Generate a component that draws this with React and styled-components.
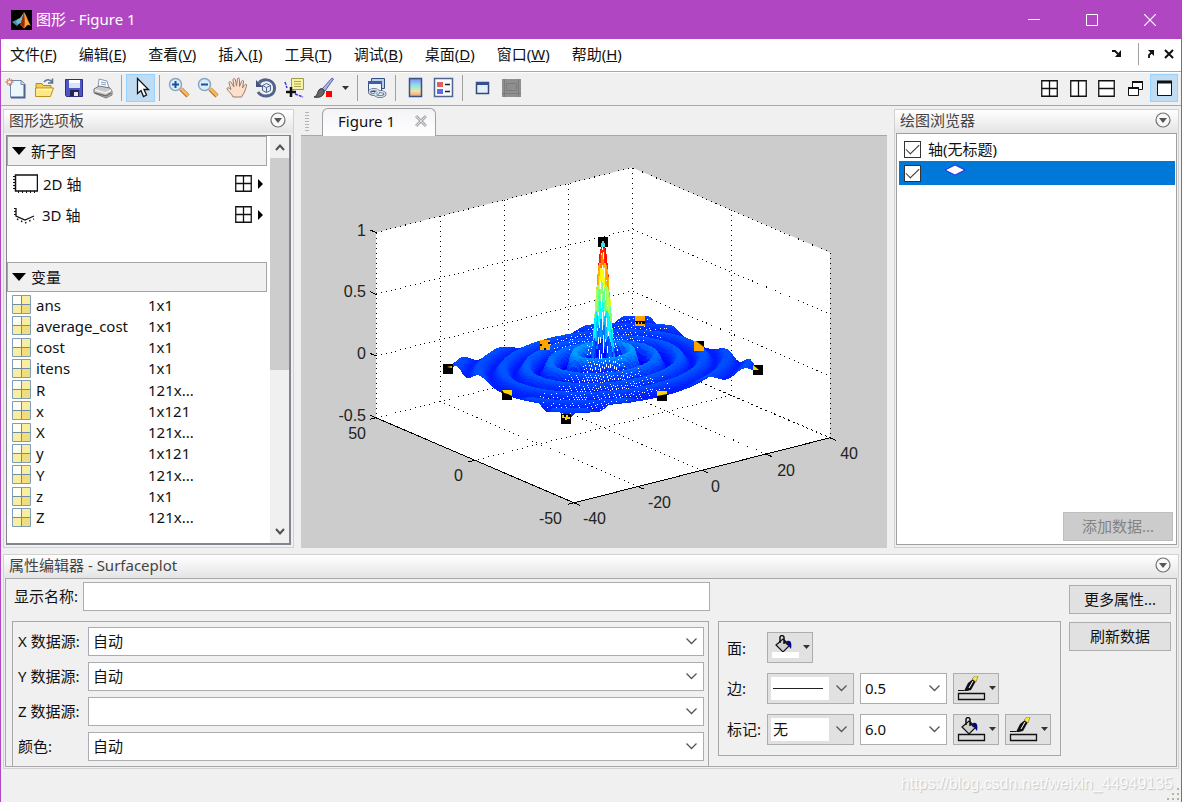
import React from "react"
import styled, { createGlobalStyle } from "styled-components"

const GlobalStyle = createGlobalStyle`
  * {
    box-sizing: border-box;
  }
  body {
    margin: 0;
    background: #f0f0f0;
    color: #111;
    font-family: "Noto Sans", "Noto Sans CJK SC", sans-serif;
    font-size: 15px;
    line-height: 20px;
  }
  button, input, select {
    font: inherit;
    color: inherit;
    margin: 0;
    padding: 0;
    border-radius: 0;
  }
  svg {
    display: block;
  }
`

const Window = styled.div`
  min-height: 100vh;
  display: flex;
  flex-direction: column;
  border: solid #b146c2;
  border-width: 0 1px;
`

const TitleBar = styled.header`
  height: 39px;
  display: flex;
  align-items: center;
  background: #b146c2;
  color: #fff;
  padding: 0 2px 0 10px;
`

const WindowTitle = styled.h1`
  margin: 0 auto 0 4px;
  padding-bottom: 2px;
  font-size: 15px;
  font-weight: 400;
`

const CaptionBtn = styled.button`
  width: 58px;
  height: 39px;
  display: grid;
  place-items: center;
  border: 0;
  background: none;
`

const MenuBar = styled.nav`
  height: 33px;
  display: flex;
  align-items: center;
  gap: 22px;
  padding: 0 7px 2px 9px;
  background: #fff;
  border-bottom: 1px solid #a8a8a8;
`

const MenuItem = styled.button`
  border: 0;
  background: none;
  white-space: nowrap;
`

const MenuTools = styled.div`
  margin-left: auto;
  display: flex;
  align-items: center;
  gap: 8px;
`

const Rule = styled.span`
  width: 1px;
  height: 22px;
  background: #a0a0a0;
`

const Toolbar = styled.div`
  height: 34px;
  display: flex;
  align-items: center;
  border-top: 1px solid #fff;
  border-bottom: 1px solid #a8a8a8;
  padding: 0 3px 2px 0;
`

const Tool = styled.button`
  width: ${(p) => p.$width || 29}px;
  height: 28px;
  display: grid;
  place-items: center;
  border: 1px solid ${(p) => (p.$active ? "#99d1ff" : "transparent")};
  background: ${(p) => (p.$active ? "#bfdcf3" : "none")};
`

const Separator = styled.span`
  width: 9px;
  height: 26px;
  display: grid;
  justify-content: center;
  &::before {
    content: "";
    width: 1px;
    background: #a0a0a0;
  }
`

const Spacer = styled.span`
  flex: 1;
`

const Workspace = styled.main`
  flex: 1;
  display: flex;
  gap: 7px;
  padding: 3px 2px 2px;
`

const Panel = styled.section`
  display: flex;
  flex-direction: column;
  flex: ${(p) => (p.$width ? `0 0 ${p.$width}px` : "none")};
  border: 1px solid #d2d2d2;
`

const PanelHead = styled.header`
  height: 23px;
  flex: none;
  display: flex;
  align-items: center;
  justify-content: space-between;
  padding: 0 7px 3px 5px;
  background: linear-gradient(#fff, #e4e4e4);
  color: #444;
`

const PanelTitle = styled.h2`
  margin: 0;
  font-size: 15px;
  font-weight: 400;
`

const RoundBtn = styled.button`
  border: 0;
  background: none;
`

const PaletteBox = styled.div`
  flex: 1;
  display: flex;
  margin: 2px;
  border: 2px solid #82878f;
  border-width: 1px 2px 2px 1px;
  background: #fff;
`

const PaletteBody = styled.div`
  flex: 1;
  display: flex;
  flex-direction: column;
`

const SectionHead = styled.button`
  height: 30px;
  display: flex;
  align-items: center;
  gap: 5px;
  padding: 0 4px;
  border: 1px solid #a4a4a4;
  background: #f0f0f0;
`

const AxesList = styled.div`
  height: 96px;
  padding-top: 2px;
`

const AxesRow = styled.div`
  height: 31px;
  display: flex;
  align-items: center;
  gap: 5px;
  padding: 0 3px 0 6px;
`

const PlainBtn = styled.button`
  display: flex;
  align-items: center;
  gap: 5px;
  border: 0;
  background: none;
`

const VariableTable = styled.table`
  width: 100%;
  height: 234px;
  margin-top: 2px;
  border-collapse: collapse;
  table-layout: fixed;
`

const VariableName = styled.td`
  width: 134px;
  padding: 0 0 0 5px;
`

const NameCell = styled.div`
  display: flex;
  align-items: center;
  gap: 5px;
`

const VariableSize = styled.td`
  padding: 0 0 0 7px;
`

const ScrollTrack = styled.div`
  width: 19px;
  margin-left: 3px;
  display: flex;
  flex-direction: column;
  align-items: center;
  padding: 7px 0;
  background: #f0f0f0;
`

const ScrollThumb = styled.div`
  width: 100%;
  height: 212px;
  margin: 7px 0 auto;
  background: #cdcdcd;
`

const Figure = styled.section`
  flex: 1;
  min-width: 0;
  display: flex;
  flex-direction: column;
`

const TabStrip = styled.div`
  height: 27px;
  flex: none;
  display: flex;
  align-items: flex-end;
  gap: 13px;
  padding-left: 4px;
  border-bottom: 1px solid #a8a8a8;
`

const Grip = styled.span`
  width: 4px;
  height: 20px;
  margin-bottom: 3px;
  background: repeating-linear-gradient(#b4b4b4 0 1px, #f0f0f0 1px 3px);
`

const Tab = styled.div`
  width: 114px;
  height: 28px;
  display: flex;
  align-items: center;
  justify-content: space-between;
  margin-bottom: -1px;
  padding: 0 8px 3px 15px;
  border: 1px solid #a0a0a0;
  border-bottom: 0;
  border-radius: 6px 6px 0 0;
  background: linear-gradient(#f4f4f8, #fff);
`

const PlotArea = styled.div`
  flex: 1;
  min-height: 412px;
  background: #ccc;
  overflow: hidden;
`

const BrowserBody = styled.div`
  flex: 1;
  display: flex;
  flex-direction: column;
  margin: 0 1px 2px;
  padding: 3px 1px 3px 2px;
  border: 1px solid #a0a0a0;
  background: #fff;
`

const TreeRow = styled.label`
  height: 24px;
  display: flex;
  align-items: center;
  gap: ${(p) => (p.$child ? 23 : 7)}px;
  padding-left: 5px;
  background: ${(p) => (p.$selected ? "#0078d7" : "#fff")};
  & > svg {
    margin-bottom: 6px;
  }
`

const Check = styled.input`
  appearance: none;
  width: 17px;
  height: 17px;
  display: grid;
  place-items: center;
  border: 1px solid #333;
  background: #fff;
  &:checked::before {
    content: "";
    width: 12px;
    height: 6px;
    margin-top: -4px;
    border: solid #333;
    border-width: 0 0 1px 1px;
    transform: rotate(-45deg);
  }
`

const Push = styled.button`
  width: ${(p) => p.$width || 102}px;
  height: 29px;
  padding-bottom: 1px;
  border: 1px solid #adadad;
  background: #e1e1e1;
  &:disabled {
    border-color: #bfbfbf;
    background: #ccc;
    color: #838383;
  }
`

const BrowserFoot = styled.div`
  margin-top: auto;
  display: flex;
  justify-content: flex-end;
  padding-right: 2px;
`

const Properties = styled(Panel)`
  margin: 4px 2px 0;
`

const PropertyBody = styled.form`
  height: 189px;
  display: flex;
  align-items: flex-start;
  gap: 8px;
  margin: 0 1px 1px;
  padding: 3px 5px 0 6px;
  border: 1px solid #a8a8a8;
  overflow: hidden;
`

const MainFields = styled.div`
  flex: 1;
`

const NameRow = styled.div`
  display: flex;
  align-items: center;
  gap: 5px;
  padding-left: 2px;
`

const Label = styled.label`
  padding-bottom: 2px;
  white-space: nowrap;
`

const TextBox = styled.input`
  flex: 1;
  min-width: 0;
  height: 29px;
  padding: 0 4px;
  border: 1px solid #abadb3;
  background: #fff;
`

const SourceGroup = styled.div`
  display: grid;
  grid-template-columns: 66px 1fr;
  align-items: center;
  gap: 6px 4px;
  margin: 10px 1px 0 0;
  padding: 5px 4px 8px 5px;
  border: 1px solid #a8a8a8;
  border-bottom: 0;
`

const SelectWrap = styled.span`
  display: grid;
  align-items: center;
  & > * {
    grid-area: 1 / 1;
  }
  & > svg {
    pointer-events: none;
    justify-self: end;
    margin-right: 7px;
  }
  & > svg + svg {
    justify-self: start;
    margin-left: 6px;
  }
`

const Select = styled.select`
  appearance: none;
  width: 100%;
  height: ${(p) => p.$height || 29}px;
  padding: 0 0 2px 4px;
  border: 1px solid #abadb3;
  background: #fff;
`

const FixedSelect = styled(Select)`
  padding-left: 2px;
  border: solid #e1e1e1;
  border-width: 4px 25px 4px 4px;
  outline: 1px solid #abadb3;
  outline-offset: -1px;
`

const StyleGroup = styled.div`
  display: grid;
  grid-template-columns: 34px 87px 87px 46px 46px;
  align-items: center;
  gap: 10px 6px;
  margin-top: 39px;
  padding: 10px 9px 10px 8px;
  border: 1px solid #a8a8a8;
`

const Swatch = styled.button`
  width: 46px;
  height: 31px;
  display: flex;
  align-items: center;
  justify-content: center;
  gap: 3px;
  border: 1px solid #abadb3;
  background: #e1e1e1;
`

const Actions = styled.div`
  display: flex;
  flex-direction: column;
  gap: 8px;
  padding-top: 3px;
`

const Footer = styled.footer`
  position: relative;
  height: 33px;
  display: flex;
  align-items: center;
  justify-content: flex-end;
  padding: 0 8px 3px 0;
  color: #fbfbfb;
  font-family: "Liberation Sans", Arial, sans-serif;
  font-size: 16px;
  text-shadow: 1px 1px 1px #c4c4c4;
`

const ResizeGrip = styled.span`
  position: absolute;
  right: 1px;
  bottom: 1px;
`

const menus = [
  ["文件", "F"],
  ["编辑", "E"],
  ["查看", "V"],
  ["插入", "I"],
  ["工具", "T"],
  ["调试", "B"],
  ["桌面", "D"],
  ["窗口", "W"],
  ["帮助", "H"],
]

const variables = [
  ["ans", "1x1"],
  ["average_cost", "1x1"],
  ["cost", "1x1"],
  ["itens", "1x1"],
  ["R", "121x..."],
  ["x", "1x121"],
  ["X", "121x..."],
  ["y", "1x121"],
  ["Y", "121x..."],
  ["z", "1x1"],
  ["Z", "121x..."],
]

/* ---------- icons ---------- */

const Icon = ({ w = 22, h = 22, children }) => (
  <svg width={w} height={h} viewBox={`0 0 ${w} ${h}`} fill="none" aria-hidden="true">
    {children}
  </svg>
)

const Logo = () => (
  <Icon w={21} h={20}>
    <path d="M0 0h21v20H0z" fill="#000" />
    <path d="M1 12l6-3 3 3-4 4z" fill="#3f97b5" />
    <path d="M7 9c3-1 4-4 6-7l-3 11-3 1-2-2z" fill="#7cb5c4" />
    <path d="M13 2c2 2 4 9 7 14-3-2-4-1-6 2-2 1-3-3-5-3 2-3 3-9 4-13z" fill="#e8701a" />
    <path d="M13 3c1 3 1 8 0 14-1 0-2-2-4-2 2-3 3-8 4-12z" fill="#8d2b10" />
    <path d="M13 3c3 4 3 8 6 12-3-1-3 0-5 2 0-5 0-9-1-14z" fill="#f8a637" />
  </Icon>
)

const NewIcon = () => (
  <Icon>
    <path d="M5.500 3.500h11l3 3v14h-14z" fill="#edf5fd" stroke="#7089b0" />
    <path d="M19.500 7v13.500H6" stroke="#4a638f" strokeWidth="2" />
    <path d="M16 3.500v4h4" fill="#c5d9ef" stroke="#7089b0" />
    <path d="M4.500 1v8M.5 5h8M2 2.500l5 5M7 2.500l-5 5" stroke="#e07b4c" strokeWidth="1.300" />
    <circle cx="4.500" cy="5" r="1.500" fill="#fff" />
  </Icon>
)

const OpenIcon = () => (
  <Icon>
    <path d="M2 19V6.500h6l1 2h8V12" fill="#f3cd55" stroke="#b98a1c" />
    <path d="M1.500 19.500V11h15l3 0-3 8.500z" fill="#fde883" stroke="#bf8f1f" />
    <path d="M3 12.500h15" stroke="#fff8c8" strokeWidth="1.500" />
    <path d="M10 5c2-3 6-3 8 0M18.500 1.500V6H14" stroke="#58728d" strokeWidth="1.500" />
  </Icon>
)

const SaveIcon = () => (
  <Icon>
    <path d="M2.500 2.500h17v17h-16l-1-1z" fill="#4f55c4" stroke="#302f86" />
    <path d="M6 3h11v8H6z" fill="#d4e6fa" />
    <path d="M6 3h11v3H6z" fill="#fff" />
    <path d="M7 13h9v6H7z" fill="#242452" />
    <path d="M11 15h4v4h-4z" fill="#e8e8f4" />
  </Icon>
)

const PrintIcon = () => (
  <Icon>
    <path d="M6 11L7 2l8 2 2 7z" fill="#fff" stroke="#8797a8" />
    <path d="M9 5l5 1M9 7l5 1" stroke="#7aa0d0" />
    <path d="M2 12l5-3 11 2 2 3v4l-6 3-12-5z" fill="#c8c8c8" stroke="#777" />
    <path d="M3 13l11 3 5-3" stroke="#f2f2f2" strokeWidth="1.500" />
    <path d="M3 16l11 3 5-3" stroke="#6d6d6d" strokeWidth="1.500" />
  </Icon>
)

const PointerIcon = () => (
  <Icon>
    <path
      d="M7.500 1.500v15l3.500-3 2.500 6 3-1.500-2.500-5.500h4.500z"
      fill="#fff"
      stroke="#111"
      strokeWidth="1.300"
    />
  </Icon>
)

const ZoomIcon = ({ plus }) => (
  <Icon>
    <path d="M13 12l7 7" stroke="#b97b2a" strokeWidth="4.500" />
    <path d="M13 11.500l7 7" stroke="#f5b964" strokeWidth="2.500" />
    <circle cx="7.500" cy="7.500" r="6" fill="#d9eefa" stroke="#8ba6bf" strokeWidth="1.500" />
    <path d="M4 7.500h7" stroke="#1d4f9c" strokeWidth="2" />
    {plus && <path d="M7.500 4v7" stroke="#1d4f9c" strokeWidth="2" />}
  </Icon>
)

const HandIcon = () => (
  <Icon>
    <path
      d="M7 20c-1-3-4-5-6-8 0-2 2-1.500 4 .5L3 6c0-2 2-2 2.500 0L8 10 7 3c0-2 2-2 2.500 0l1 6 1-7c.5-1.500 2-1.500 2 .5l0 7 2-5c1-2 2.500-1 2 .5l-1 6 2-3c1.500-1.500 2.500-.5 2 1l-2 6-3 5z"
      fill="#fbe0cc"
      stroke="#a07c6c"
      strokeWidth="1"
    />
  </Icon>
)

const RotateIcon = () => (
  <Icon>
    <path d="M4 6c3-4 12-5 15 2 2 7-2 11-8 11-4 0-6-1-8-4" stroke="#51628b" strokeWidth="3" />
    <path d="M1 3v7h7z" fill="#41547d" />
    <path d="M7.500 8.500l4-2 4 2v5l-4 2-4-2zM7.500 8.500l4 2 4-2M11.500 10.500V15" fill="#e3eaf5" stroke="#50658f" />
  </Icon>
)

const DataTipIcon = () => (
  <Icon>
    <path d="M7.500 1.500h12v11h-12z" fill="#f8f3a4" stroke="#a29a4a" />
    <path d="M10 4.500h7M10 7h7M10 9.500h7" stroke="#aaa45a" />
    <path d="M1 5l2 6M11 17l8 3" stroke="#3535ef" strokeWidth="1.500" strokeDasharray="3 1" />
    <path d="M7 10v10M2 15h10" stroke="#111" strokeWidth="2.500" />
  </Icon>
)

const BrushIcon = () => (
  <Icon>
    <path d="M9 12L19 1l1.500 1L12 14z" fill="#a9b2ef" stroke="#5c62ab" />
    <path d="M1 20c4-1 3-6 6-8 3-1 5 1 4 4-1 4-6 5-10 4z" fill="#666" stroke="#333" />
    <path d="M13 14h6v6h-6z" fill="#f00" />
  </Icon>
)

const LinkIcon = () => (
  <Icon>
    <path d="M5.500 1.500h13v10h-13z" fill="#b9cfe9" stroke="#344f87" />
    <path d="M2.500 4.500h13v10h-13z" fill="#f0f6fd" stroke="#344f87" />
    <path d="M2 4h14v3H2z" fill="#3e5fa5" />
    <ellipse cx="8" cy="15" rx="4.500" ry="2.500" stroke="#5b6a80" strokeWidth="3" />
    <ellipse cx="14" cy="17" rx="5" ry="2.500" stroke="#5b6a80" strokeWidth="3" />
    <ellipse cx="8" cy="15" rx="4.500" ry="2.500" stroke="#d4e2ee" strokeWidth="1.300" />
    <ellipse cx="14" cy="17" rx="5" ry="2.500" stroke="#d4e2ee" strokeWidth="1.300" />
  </Icon>
)

const ColorbarIcon = () => (
  <Icon>
    <defs>
      <linearGradient id="bar" x1="0" y1="0" x2="0" y2="1">
        <stop offset="0" stopColor="#8e84e6" />
        <stop offset=".35" stopColor="#85dff0" />
        <stop offset=".7" stopColor="#eee69a" />
        <stop offset="1" stopColor="#f69885" />
      </linearGradient>
    </defs>
    <path d="M5.500 1.500h12v18h-12z" fill="url(#bar)" stroke="#3b5284" strokeWidth="1.500" />
  </Icon>
)

const LegendIcon = () => (
  <Icon>
    <path d="M1.500 1.500h18v18h-18z" fill="#f7faff" stroke="#50658f" strokeWidth="1.500" />
    <path d="M4 5h6v5H4z" fill="#e2605c" />
    <path d="M4 12h6v5H4z" fill="#6767e0" />
    <path d="M12 7.500h5M12 14.500h5" stroke="#222" strokeWidth="1.500" />
  </Icon>
)

const HideToolsIcon = () => (
  <Icon>
    <path d="M5.500 5.500h12v11h-12z" fill="#e3effc" stroke="#354878" strokeWidth="1.500" />
    <path d="M5 5h13v3H5z" fill="#354f93" />
  </Icon>
)

const ShowToolsIcon = () => (
  <Icon>
    <path d="M2 2h19v18H2z" fill="#8f8f8f" />
    <path d="M6.500 6.500h10v7h-10zM2 16.500h19M4.500 2v18M18.500 2v18" stroke="#7c7c7c" />
  </Icon>
)

const TileIcon = ({ cols, rows }) => (
  <Icon w={17} h={17}>
    <path
      d={`M.75.75h15.500v15.500H.75z${cols ? "M8.500 1v15" : ""}${rows ? "M1 8.500h15" : ""}`}
      fill="#fff"
      stroke="#111"
      strokeWidth="1.300"
    />
  </Icon>
)

const CascadeIcon = () => (
  <Icon w={17} h={17}>
    <path d="M5.500 2.500h10v7h-10z" fill="#fff" stroke="#111" />
    <path d="M5 2h11" stroke="#111" strokeWidth="2" />
    <path d="M1.500 8.500h10v7h-10z" fill="#fff" stroke="#111" />
    <path d="M1 8h11" stroke="#111" strokeWidth="2" />
  </Icon>
)

const MaximizeIcon = () => (
  <Icon w={17} h={17}>
    <path d="M1.500 1.500h14v14h-14z" fill="#fff" stroke="#111" />
    <path d="M1 2h15" stroke="#111" strokeWidth="3" />
  </Icon>
)

const CircleMenuIcon = () => (
  <Icon w={16} h={16}>
    <circle cx="8" cy="8" r="7" fill="#f8f8f8" stroke="#707070" strokeWidth="1.200" />
    <path d="M4 6h8l-4 5z" fill="#555" />
  </Icon>
)

const CaretDown = () => (
  <Icon w={7} h={5}>
    <path d="M0 0h7L3.500 4z" fill="#333" />
  </Icon>
)

const Chevron = () => (
  <Icon w={11} h={7}>
    <path d="M.5.500l5 5 5-5" stroke="#555" strokeWidth="1.300" />
  </Icon>
)

const ScrollArrow = ({ up }) => (
  <Icon w={10} h={8}>
    <path d={up ? "M1 7l4-4.500L9 7" : "M1 1l4 4.500L9 1"} stroke="#505050" strokeWidth="2" />
  </Icon>
)

const Triangle = () => (
  <Icon w={14} h={8}>
    <path d="M0 0h14L7 8z" fill="#000" />
  </Icon>
)

const Axes2D = () => (
  <Icon w={25} h={19}>
    <path d="M2.500 1h22v16h-22z" stroke="#111" strokeWidth="1.500" />
    <path d="M0 2.500h2M0 5.500h2M0 8.500h2M0 11.500h2M0 14.500h2M5.500 17v2M9.500 17v2M13.500 17v2M17.500 17v2M21.500 17v2" stroke="#111" />
  </Icon>
)

const Axes3D = () => (
  <Icon w={24} h={18}>
    <path d="M3 2v8l9 4 9-4" stroke="#111" strokeWidth="1.300" />
    <path d="M1 2.500h2M1 5.500h2M1 8.500h2" stroke="#111" />
    <path d="M4 13l8 4 9-4" stroke="#111" strokeWidth="1.500" strokeDasharray="1.500 3" />
  </Icon>
)

const MatrixIcon = () => (
  <Icon w={19} h={19}>
    <path d="M.5.500h18v18H.5z" fill="#f9ee9f" stroke="#7e9db8" />
    <path d="M1 1h8v8H1z" fill="#fffef4" />
    <path d="M10 10h8v8h-8z" fill="#f2dc7c" />
    <path d="M9.500 1v17M1 9.500h17" stroke="#6d8ca6" />
  </Icon>
)

const SurfaceIcon = () => (
  <Icon w={22} h={12}>
    <path d="M1 6l10-5 10 5-10 5z" fill="#fff" stroke="#2222f0" />
  </Icon>
)

const BucketIcon = ({ plain }) => (
  <Icon w={29} h={25}>
    <path d="M5 10l7-6 7 6-7 7z" fill="#cfcfcf" stroke="#111" strokeWidth="1.200" />
    <path d="M9 8V2c1-2 3-2 4 0v7M13 6l4 4" stroke="#111" strokeWidth="1.500" />
    <path d="M16 6c4-1 5 2 4 8l-3-4z" fill="#00008b" />
    {plain ? (
      <path d="M1 17h27v6H1z" fill="#fff" />
    ) : (
      <path d="M1.500 17.500h26v6h-26z" fill="#dcdcdc" stroke="#111" strokeWidth="1.300" />
    )}
  </Icon>
)

const PenIcon = () => (
  <Icon w={29} h={25}>
    <path d="M1 14.500h6" stroke="#111" />
    <path d="M7 15l4-8 5-4 3 2-5 9-4 1z" fill="#111" />
    <path d="M12 12l4-7" stroke="#fff" />
    <path d="M15 3l3-3h3l-2 6z" fill="#f5ee2d" stroke="#555" strokeWidth=".500" />
    <path d="M1.500 17.500h26v6h-26z" fill="#dcdcdc" stroke="#111" strokeWidth="1.300" />
  </Icon>
)

/* ---------- surface plot ---------- */

// axis units to canvas pixels, z = 0 at the middle of the surface
const project = (x, y, z) => [
  302 + 3.2 * x - 1.98 * y,
  230 - 0.8125 * x - 0.85 * y - 123.5 * z,
]

const line = (...points) =>
  "M" + points.map((p) => project(...p).map((v) => v.toFixed(1)).join(" ")).join("L")

const sinc = (x, y) => {
  const r = Math.hypot(x, y) + 1e-9
  return Math.sin(r) / r
}

const jet = (z) => {
  const t = (z + 0.217) / 1.217
  const channel = (c) =>
    Math.round(255 * Math.max(0, Math.min(1, 1.5 - Math.abs(4 * t - c))))
  return `rgb(${channel(3)},${channel(2)},${channel(1)})`
}

// far corner first, so nearer faces hide what is behind them
const faces = []
for (let y = 29.5; y >= -30; y -= 0.5) {
  for (let x = 29.5; x >= -30; x -= 0.5) {
    const corners = [
      [x, y],
      [x + 0.5, y],
      [x + 0.5, y + 0.5],
      [x, y + 0.5],
    ].map(([a, b]) => [a, b, sinc(a, b)])
    faces.push({ d: line(...corners) + "Z", color: jet(corners[0][2]) })
  }
}

const zTicks = [-0.5, 0, 0.5, 1]
const grid = [
  ...zTicks.map((z) => line([-40, 50, z], [40, 50, z], [40, -50, z])),
  ...[-40, -20, 0, 20, 40].map((x) => line([x, 50, 1], [x, 50, -0.5], [x, -50, -0.5])),
  ...[0, -50].map((y) => line([40, y, 1], [40, y, -0.5], [-40, y, -0.5])),
]

const ticks = [
  ...zTicks.map((z) => line([-40, 50, z], [-40, 53, z])),
  ...[-40, -20, 0, 20, 40].map((x) => line([x, -50, -0.5], [x, -53, -0.5])),
  ...[-50, 0, 50].map((y) => line([-40, y, -0.5], [-42, y, -0.5])),
]

const tickLabels = [
  ["1", 65, 100],
  ["0.5", 65, 161],
  ["0", 65, 223],
  ["-0.5", 65, 285],
  ["50", 65, 303],
  ["0", 162, 345],
  ["-50", 261, 388],
  ["-40", 305, 388],
  ["-20", 370, 372],
  ["0", 419, 356],
  ["20", 494, 340],
  ["40", 557, 323],
]

const handles = [
  { x: 142, y: 228, color: "#ffc800", d: "M4 3l5-1v2z" },
  { x: 201, y: 254, color: "#ffd700", d: "M0 0h10v6L6 4 2 3z" },
  { x: 260, y: 278, color: "#ffc800", d: "M1 1h2v2h2v-2h2v2h2v2h-3v1h-2v-2h-3z" },
  { x: 356, y: 255, color: "#ffd700", d: "M0 0h10v3L5 4 0 5z" },
  { x: 452, y: 229, color: "#ffd700", d: "M0 0l6 5H0z" },
  { x: 393, y: 205, color: "#ffa500", d: "M0 0h2l8 6v4H0z" },
  { x: 334, y: 180, color: "#ffa500", d: "M0 0h10v5H0zM0 8h10v2H0zM0 6h1v2H0zM3 6h1v2H3zM6 6h1v2H6z" },
  { x: 239, y: 204, color: "#ffa500", d: "M0 0h10v2H8v2h2v6H6V8H4v2H0V6h2V4H0z" },
  { x: 297, y: 101, color: "#50d8e0", d: "M4 4h2v2h1v4H3V6h1z" },
]

const SurfacePlot = () => (
  <svg width="100%" height="100%" viewBox="0 0 586 412" role="img" aria-label="Figure 1">
    <path
      d={line([-40, 50, 1], [40, 50, 1], [40, -50, 1], [40, -50, -0.5], [-40, -50, -0.5], [-40, 50, -0.5]) + "Z"}
      fill="#fff"
    />
    <g fill="none" stroke="#000" shapeRendering="crispEdges">
      {grid.map((d) => (
        <path key={d} d={d} strokeDasharray="1 4" />
      ))}
      <path d={line([-40, 50, -0.5], [-40, -50, -0.5], [40, -50, -0.5])} />
      {ticks.map((d) => (
        <path key={d} d={d} />
      ))}
    </g>
    <g fill="#fff" strokeWidth="1.400" shapeRendering="crispEdges">
      {faces.map((face, i) => (
        <path key={i} d={face.d} stroke={face.color} />
      ))}
    </g>
    {handles.map((h) => (
      <g key={h.d} transform={`translate(${h.x} ${h.y})`}>
        <path d="M0 0h10v10H0z" fill="#000" />
        <path d={h.d} fill={h.color} />
      </g>
    ))}
    <g fontFamily="Liberation Sans, Arial, sans-serif" fontSize="16" fill="#222" textAnchor="end">
      {tickLabels.map(([text, x, y]) => (
        <text key={`${text}-${x}-${y}`} x={x} y={y}>
          {text}
        </text>
      ))}
    </g>
  </svg>
)

/* ---------- panels ---------- */

const PanelHeader = ({ title }) => (
  <PanelHead>
    <PanelTitle>{title}</PanelTitle>
    <RoundBtn aria-label="选项">
      <CircleMenuIcon />
    </RoundBtn>
  </PanelHead>
)

const Palette = () => (
  <Panel $width={291}>
    <PanelHeader title="图形选项板" />
    <PaletteBox>
      <PaletteBody>
        <SectionHead>
          <Triangle />
          新子图
        </SectionHead>
        <AxesList>
          {[
            ["2D 轴", Axes2D],
            ["3D 轴", Axes3D],
          ].map(([name, Drawing]) => (
            <AxesRow key={name}>
              <PlainBtn>
                <Drawing />
                {name}
              </PlainBtn>
              <Spacer />
              <PlainBtn aria-label={`${name} 网格`}>
                <TileIcon cols rows />
                <Icon w={7} h={10}>
                  <path d="M1 0l5 5-5 5z" fill="#000" />
                </Icon>
              </PlainBtn>
            </AxesRow>
          ))}
        </AxesList>
        <SectionHead>
          <Triangle />
          变量
        </SectionHead>
        <VariableTable>
          <tbody>
            {variables.map(([name, size]) => (
              <tr key={name}>
                <VariableName>
                  <NameCell>
                    <MatrixIcon />
                    {name}
                  </NameCell>
                </VariableName>
                <VariableSize>{size}</VariableSize>
              </tr>
            ))}
          </tbody>
        </VariableTable>
      </PaletteBody>
      <ScrollTrack>
        <ScrollArrow up />
        <ScrollThumb />
        <ScrollArrow />
      </ScrollTrack>
    </PaletteBox>
  </Panel>
)

const PlotBrowser = () => (
  <Panel $width={285}>
    <PanelHeader title="绘图浏览器" />
    <BrowserBody>
      <TreeRow>
        <Check type="checkbox" defaultChecked />
        轴(无标题)
      </TreeRow>
      <TreeRow $selected $child>
        <Check type="checkbox" defaultChecked aria-label="Surfaceplot" />
        <SurfaceIcon />
      </TreeRow>
      <BrowserFoot>
        <Push disabled $width={110}>
          添加数据...
        </Push>
      </BrowserFoot>
    </BrowserBody>
  </Panel>
)

const SourceField = ({ id, label, value }) => (
  <>
    <Label htmlFor={id}>{label}:</Label>
    <SelectWrap>
      <Select id={id}>
        <option>{value}</option>
      </Select>
      <Chevron />
    </SelectWrap>
  </>
)

const PropertyEditor = () => (
  <Properties>
    <PanelHeader title="属性编辑器 - Surfaceplot" />
    <PropertyBody onSubmit={(e) => e.preventDefault()}>
      <MainFields>
        <NameRow>
          <Label htmlFor="displayName">显示名称:</Label>
          <TextBox id="displayName" type="text" />
        </NameRow>
        <SourceGroup>
          <SourceField id="xSource" label="X 数据源" value="自动" />
          <SourceField id="ySource" label="Y 数据源" value="自动" />
          <SourceField id="zSource" label="Z 数据源" value="" />
          <SourceField id="color" label="颜色" value="自动" />
        </SourceGroup>
      </MainFields>
      <StyleGroup>
        <span>面:</span>
        <Swatch type="button" aria-label="面颜色">
          <BucketIcon plain />
          <CaretDown />
        </Swatch>
        <i />
        <i />
        <i />
        <Label htmlFor="edge">边:</Label>
        <SelectWrap>
          <FixedSelect id="edge" $height={31}>
            <option aria-label="实线" />
          </FixedSelect>
          <Chevron />
          <Icon w={50} h={1}>
            <path d="M0 .5h50" stroke="#222" />
          </Icon>
        </SelectWrap>
        <SelectWrap>
          <Select aria-label="边宽度" $height={31}>
            <option>0.5</option>
          </Select>
          <Chevron />
        </SelectWrap>
        <Swatch type="button" aria-label="边颜色">
          <PenIcon />
          <CaretDown />
        </Swatch>
        <i />
        <Label htmlFor="marker">标记:</Label>
        <SelectWrap>
          <FixedSelect id="marker" $height={31}>
            <option>无</option>
          </FixedSelect>
          <Chevron />
        </SelectWrap>
        <SelectWrap>
          <Select aria-label="标记大小" $height={31}>
            <option>6.0</option>
          </Select>
          <Chevron />
        </SelectWrap>
        <Swatch type="button" aria-label="标记填充颜色">
          <BucketIcon />
          <CaretDown />
        </Swatch>
        <Swatch type="button" aria-label="标记边颜色">
          <PenIcon />
          <CaretDown />
        </Swatch>
      </StyleGroup>
      <Actions>
        <Push type="button">更多属性...</Push>
        <Push type="button">刷新数据</Push>
      </Actions>
    </PropertyBody>
  </Properties>
)

const App = () => (
  <>
    <GlobalStyle />
    <Window>
      <TitleBar>
        <Logo />
        <WindowTitle>图形 - Figure 1</WindowTitle>
        <CaptionBtn aria-label="最小化">
          <Icon w={12} h={12}>
            <path d="M0 5.500h12" stroke="#fff" />
          </Icon>
        </CaptionBtn>
        <CaptionBtn aria-label="最大化">
          <Icon w={12} h={12}>
            <path d="M.5.500h11v11H.5z" stroke="#fff" />
          </Icon>
        </CaptionBtn>
        <CaptionBtn aria-label="关闭">
          <Icon w={12} h={12}>
            <path d="M0 0l12 12M12 0L0 12" stroke="#fff" strokeWidth="1.200" />
          </Icon>
        </CaptionBtn>
      </TitleBar>

      <MenuBar>
        {menus.map(([name, key]) => (
          <MenuItem key={key}>
            {name}(<u>{key}</u>)
          </MenuItem>
        ))}
        <MenuTools>
          <PlainBtn aria-label="停靠">
            <Icon w={10} h={10}>
              <path d="M0 2h3l3 3" stroke="#111" strokeWidth="1.800" />
              <path d="M9 1v7H3z" fill="#111" />
            </Icon>
          </PlainBtn>
          <Spacer />
          <Rule />
          <PlainBtn aria-label="取消停靠">
            <Icon w={9} h={10}>
              <path d="M2 9V6l3-3" stroke="#111" strokeWidth="1.800" />
              <path d="M1 1h6v6z" fill="#111" />
            </Icon>
          </PlainBtn>
          <PlainBtn aria-label="关闭图形">
            <Icon w={10} h={10}>
              <path d="M1 1l8 8M9 1L1 9" stroke="#111" strokeWidth="2" />
            </Icon>
          </PlainBtn>
        </MenuTools>
      </MenuBar>

      <Toolbar>
        <Tool aria-label="新建"><NewIcon /></Tool>
        <Tool aria-label="打开"><OpenIcon /></Tool>
        <Tool aria-label="保存"><SaveIcon /></Tool>
        <Tool aria-label="打印"><PrintIcon /></Tool>
        <Separator />
        <Tool $active aria-label="编辑绘图"><PointerIcon /></Tool>
        <Separator />
        <Tool aria-label="放大"><ZoomIcon plus /></Tool>
        <Tool aria-label="缩小"><ZoomIcon /></Tool>
        <Tool aria-label="平移"><HandIcon /></Tool>
        <Tool aria-label="三维旋转"><RotateIcon /></Tool>
        <Tool aria-label="数据游标"><DataTipIcon /></Tool>
        <Tool aria-label="刷亮"><BrushIcon /></Tool>
        <Tool $width={15} aria-label="刷亮颜色"><CaretDown /></Tool>
        <Separator />
        <Tool aria-label="链接绘图"><LinkIcon /></Tool>
        <Separator />
        <Tool aria-label="颜色栏"><ColorbarIcon /></Tool>
        <Tool aria-label="图例"><LegendIcon /></Tool>
        <Separator />
        <Tool aria-label="隐藏绘图工具"><HideToolsIcon /></Tool>
        <Tool aria-label="显示绘图工具"><ShowToolsIcon /></Tool>
        <Spacer />
        <Tool aria-label="平铺"><TileIcon cols rows /></Tool>
        <Tool $width={28} aria-label="左右"><TileIcon cols /></Tool>
        <Tool aria-label="上下"><TileIcon rows /></Tool>
        <Tool aria-label="浮动"><CascadeIcon /></Tool>
        <Tool $width={28} $active aria-label="最大化图形"><MaximizeIcon /></Tool>
      </Toolbar>

      <Workspace>
        <Palette />
        <Figure>
          <TabStrip>
            <Grip />
            <Tab>
              Figure 1
              <PlainBtn aria-label="关闭标签">
                <Icon w={12} h={12}>
                  <path d="M1 1l10 10M11 1L1 11" stroke="#aaa" strokeWidth="3" />
                  <path d="M1 1l10 10M11 1L1 11" stroke="#ddd" />
                </Icon>
              </PlainBtn>
            </Tab>
          </TabStrip>
          <PlotArea>
            <SurfacePlot />
          </PlotArea>
        </Figure>
        <PlotBrowser />
      </Workspace>

      <PropertyEditor />

      <Footer>
        https://blog.csdn.net/weixin_44949135
        <ResizeGrip>
          <Icon w={14} h={14}>
            <path
              d="M11 1h2v2h-2zM11 6h2v2h-2zM6 6h2v2H6zM11 11h2v2h-2zM6 11h2v2H6zM1 11h2v2H1z"
              fill="#b8b4a4"
            />
          </Icon>
        </ResizeGrip>
      </Footer>
    </Window>
  </>
)

export default App
